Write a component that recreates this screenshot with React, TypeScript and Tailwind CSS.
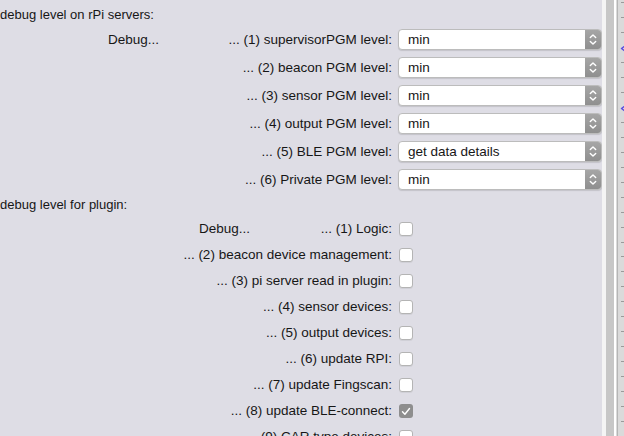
import React from "react";

type PopupRow = { label: string; value: string; lead?: boolean };
type CheckRow = { label: string; checked?: boolean; lead?: boolean };

const serverRows: PopupRow[] = [
  { label: "... (1) supervisorPGM level:", value: "min", lead: true },
  { label: "... (2) beacon PGM level:", value: "min" },
  { label: "... (3) sensor PGM level:", value: "min" },
  { label: "... (4) output PGM level:", value: "min" },
  { label: "... (5) BLE PGM level:", value: "get data details" },
  { label: "... (6) Private PGM level:", value: "min" },
];

const pluginRows: CheckRow[] = [
  { label: "... (1) Logic:", lead: true },
  { label: "... (2) beacon device management:" },
  { label: "... (3) pi server read in plugin:" },
  { label: "... (4) sensor devices:" },
  { label: "... (5) output devices:" },
  { label: "... (6) update RPI:" },
  { label: "... (7) update Fingscan:" },
  { label: "... (8) update BLE-connect:", checked: true },
  { label: "... (9) CAR type devices:" },
];

function Stepper() {
  return (
    <svg width="8" height="13" viewBox="0 0 8 13" fill="none">
      <path d="M1.3 4.6 4 1.9 6.7 4.6" stroke="white" strokeWidth="1.4" strokeLinecap="round" strokeLinejoin="round" />
      <path d="M1.3 8.4 4 11.1 6.7 8.4" stroke="white" strokeWidth="1.4" strokeLinecap="round" strokeLinejoin="round" />
    </svg>
  );
}

function Popup({ value }: { value: string }) {
  return (
    <div className="flex h-[21px] w-[204px] overflow-hidden rounded-[4px] border border-[#bcbcbc] bg-white shadow-[0_1px_1px_rgba(0,0,0,0.12)]">
      <span className="flex-1 pl-[9px] text-[13.5px] leading-[19px] text-[#161616]">{value}</span>
      <span className="flex w-[16px] items-center justify-center bg-gradient-to-b from-[#a6a6a6] to-[#8f8f8f]">
        <Stepper />
      </span>
    </div>
  );
}

function Checkbox({ checked }: { checked?: boolean }) {
  if (checked) {
    return (
      <span className="flex h-[14px] w-[14px] items-center justify-center rounded-[3px] bg-[#8e8e8e]">
        <svg width="10" height="9" viewBox="0 0 10 9" fill="none">
          <path d="M1.5 4.8 3.9 7.3 8.5 1.5" stroke="white" strokeWidth="1.4" strokeLinecap="round" strokeLinejoin="round" />
        </svg>
      </span>
    );
  }
  return <span className="block h-[14px] w-[14px] rounded-[3px] border border-[#b4b4b4] bg-white shadow-[0_1px_0_rgba(0,0,0,0.06)]" />;
}

function Label({ text, lead, leadPad }: { text: string; lead?: boolean; leadPad: string }) {
  return (
    <div className={`flex w-[392px] ${lead ? `justify-between ${leadPad}` : "justify-end"}`}>
      {lead && <span>Debug...</span>}
      <span>{text}</span>
    </div>
  );
}

function RulerStrip() {
  const marks = Array.from({ length: 29 }, (_, i) => i);
  return (
    <div className="flex h-full flex-1">
      <div className="w-[4px] bg-[#f4f4f4]" />
      <div className="w-[8px] bg-[#c7c7c7]" />
      <div className="w-[2px] bg-white" />
      <div className="flex flex-1 bg-[#dadada]">
        <div className="ml-[1px] w-[1px] bg-[#b5b5b5]" />
        <div className="flex flex-1 flex-col pt-[2px]">
          {marks.map((i) =>
            i === 3 || i === 7 ? (
              <div key={i} className="flex h-[15px] items-start pl-[2px]">
                <svg width="7" height="9" viewBox="0 0 7 9" fill="none" className="-mt-[3px]">
                  <path d="M6 1 1.5 4.5 6 8" stroke="#5a4de0" strokeWidth="1.4" strokeLinejoin="round" />
                </svg>
              </div>
            ) : (
              <div key={i} className="flex h-[15px] items-start pl-[3px]">
                <span className="block h-[1px] w-[3px] bg-[#9a9a9a]" />
              </div>
            )
          )}
        </div>
      </div>
    </div>
  );
}

export default function App() {
  return (
    <div className="flex h-[436px] w-[624px] overflow-hidden bg-[#dedde5] font-['Liberation_Sans',Arial,sans-serif] text-[13.5px] leading-[16px] text-[#161616]">
      <div className="flex w-[602px] shrink-0 flex-col pt-[7px]">
        <div className="h-[16px] whitespace-nowrap text-[13px]">debug level on rPi servers:</div>
        <div className="mt-[6px] flex flex-col gap-[7px]">
          {serverRows.map((r) => (
            <div key={r.label} className="flex h-[21px] items-center whitespace-nowrap">
              <Label text={r.label} lead={r.lead} leadPad="pl-[108px]" />
              <div className="ml-[6px]">
                <Popup value={r.value} />
              </div>
            </div>
          ))}
        </div>
        <div className="mt-[7px] h-[16px] whitespace-nowrap text-[13px]">debug level for plugin:</div>
        <div className="mt-[3px] flex flex-col">
          {pluginRows.map((r) => (
            <div key={r.label} className="flex h-[26px] shrink-0 items-center whitespace-nowrap">
              <Label text={r.label} lead={r.lead} leadPad="pl-[199px]" />
              <div className="ml-[7px]">
                <Checkbox checked={r.checked} />
              </div>
            </div>
          ))}
        </div>
      </div>
      <RulerStrip />
    </div>
  );
}
